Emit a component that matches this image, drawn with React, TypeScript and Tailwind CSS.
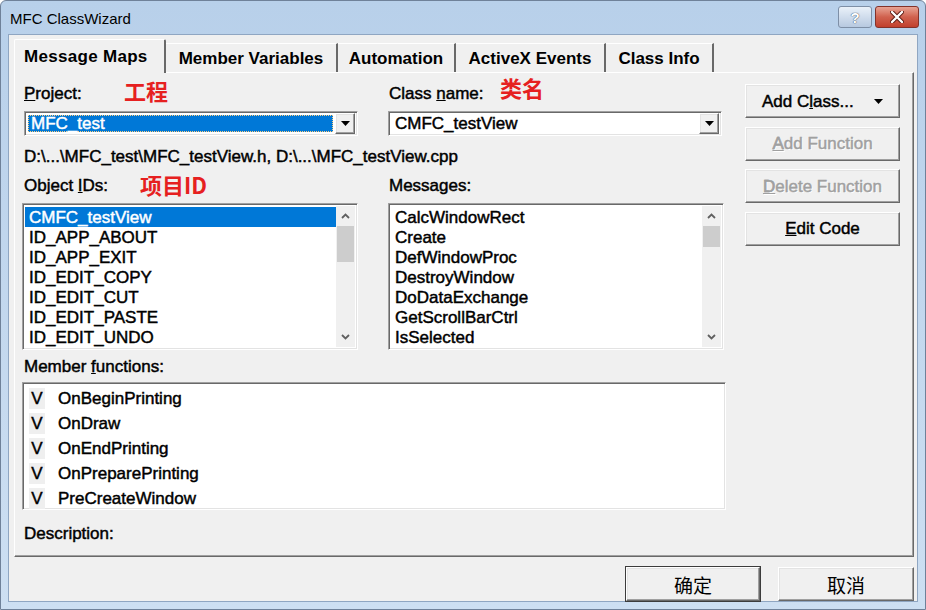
import React from "react"

const raised = "border border-t-white border-l-white border-r-[#696969] border-b-[#696969] shadow-[inset_-1px_-1px_0_#a0a0a0,inset_1px_1px_0_#e3e3e3]"
const sunken = "border border-t-[#a0a0a0] border-l-[#a0a0a0] border-r-white border-b-white shadow-[inset_1px_1px_0_#696969,inset_-1px_-1px_0_#e3e3e3]"
const txt = "text-[17px] [-webkit-text-stroke:0.45px_currentColor]"
const red = "text-[22px] font-bold text-[#e62020] leading-none font-['Noto_Sans_CJK_SC',sans-serif]"

const objectIds = ["CMFC_testView", "ID_APP_ABOUT", "ID_APP_EXIT", "ID_EDIT_COPY", "ID_EDIT_CUT", "ID_EDIT_PASTE", "ID_EDIT_UNDO"]
const messages = ["CalcWindowRect", "Create", "DefWindowProc", "DestroyWindow", "DoDataExchange", "GetScrollBarCtrl", "IsSelected"]
const memberFns = ["OnBeginPrinting", "OnDraw", "OnEndPrinting", "OnPreparePrinting", "PreCreateWindow"]
const tabs = [
    { name: "Member Variables", w: "w-[172px]" },
    { name: "Automation", w: "w-[118px]" },
    { name: "ActiveX Events", w: "w-[150px]" },
    { name: "Class Info", w: "w-[108px]" },
]

const Chevron = ({ up }: { up?: boolean }) => (
    <svg width="9" height="6" viewBox="0 0 9 6">
        <polyline points={up ? "1,5 4.5,1.5 8,5" : "1,1 4.5,4.5 8,1"} fill="none" stroke="#606060" strokeWidth="1.8" />
    </svg>
)

const DownTri = () => (
    <svg width="9" height="5" viewBox="0 0 9 5">
        <polygon points="0,0 9,0 4.5,5" fill="black" />
    </svg>
)

const ScrollBar = ({ thumb }: { thumb: string }) => (
    <div className="w-[19px] h-full flex flex-col bg-[#f0f0f0]">
        <div className="h-[20px] flex items-center justify-center"><Chevron up /></div>
        <div className={`${thumb} mx-[1px] bg-[#cdcdcd]`}></div>
        <div className="flex-1"></div>
        <div className="h-[20px] flex items-center justify-center"><Chevron /></div>
    </div>
)

const Combo = ({ value, selected }: { value: string; selected?: boolean }) => (
    <div className={`w-[334px] h-[25px] bg-white flex items-center p-[2px] ${sunken}`}>
        <div className="flex-1 h-full pl-[1px] pr-[2px] py-[1px]">
            {selected ? (
                <div className="h-full bg-[#0078d7] border border-dotted border-[#ffcf80] flex items-center px-[2px]">
                    <span className={`${txt} text-white leading-none`}>{value}</span>
                </div>
            ) : (
                <div className="h-full flex items-center px-[3px]">
                    <span className={`${txt} text-black leading-none`}>{value}</span>
                </div>
            )}
        </div>
        <div className={`w-[20px] h-[21px] bg-[#f0f0f0] flex items-center justify-center ${raised}`}>
            <DownTri />
        </div>
    </div>
)

const ListBox = ({ items, thumb, sel }: { items: string[]; thumb: string; sel?: number }) => (
    <div className={`w-[336px] h-[147px] bg-white flex p-[2px] ${sunken}`}>
        <div className="flex-1 flex flex-col pt-[1px]">
            {items.map((it, i) => (
                <div key={it} className={`h-[20px] flex items-center px-[4px] ${i === sel ? "bg-[#0078d7]" : ""}`}>
                    <span className={`${txt} leading-none ${i === sel ? "text-white" : "text-black"}`}>{it}</span>
                </div>
            ))}
        </div>
        <ScrollBar thumb={thumb} />
    </div>
)

const Btn = ({ children, disabled, className }: { children: React.ReactNode; disabled?: boolean; className?: string }) => (
    <div className={`h-[34px] bg-[#f0f0f0] flex items-center ${raised} ${className ?? ""}`}>
        <span className={`${txt} leading-none ${disabled ? "text-[#a0a0a0] [text-shadow:1px_1px_0_white]" : "text-black"}`}>{children}</span>
    </div>
)

export default function App() {
    return (
        <div className="w-[926px] h-[610px] flex flex-col bg-gradient-to-b from-[#b8d0ea] to-[#cddff2] border border-[#6f8199] rounded-t-[6px] text-black font-['Liberation_Sans','Noto_Sans_CJK_SC',sans-serif]">
            {/* title bar */}
            <div className="h-[35px] flex items-start pl-[9px] pr-[6px]">
                <span className="mt-[7px] text-[15px] text-black flex-1">MFC ClassWizard</span>
                <div className="flex gap-[3px] mt-[5px]">
                    <div className="w-[34px] h-[22px] rounded-[3px] border border-[#7e8fa6] bg-gradient-to-b from-[#eaf1f9] to-[#b7c9e0] flex items-center justify-center">
                        <span className="text-[15px] font-bold text-white leading-none [text-shadow:0_0_1px_#3b4b63,0_0_1px_#3b4b63]">?</span>
                    </div>
                    <div className="w-[44px] h-[22px] rounded-[3px] border border-[#83322a] bg-gradient-to-b from-[#e7a394] via-[#d0614e] to-[#c13f2d] flex items-center justify-center">
                        <svg width="14" height="12" viewBox="0 0 14 12">
                            <path d="M2,1 L12,11 M12,1 L2,11" stroke="#5a1a12" strokeWidth="4.2" strokeLinecap="round" />
                            <path d="M2,1 L12,11 M12,1 L2,11" stroke="white" strokeWidth="2.4" strokeLinecap="round" />
                        </svg>
                    </div>
                </div>
            </div>

            {/* client area */}
            <div className="flex-1 mx-[7px] mb-[7px] bg-[#f0f0f0] border border-[#8fa6c2] flex flex-col">
                {/* tabs */}
                <div className="flex items-end pl-[5px] pt-[3px] h-[37px] relative z-10">
                    <div className="w-[152px] h-[34px] mb-[-1px] bg-[#f0f0f0] border-l border-t border-white border-r-2 border-r-[#696969] rounded-t-[2px] flex items-center pl-[9px]">
                        <span className="text-[17px] font-bold tracking-[0.3px] leading-none">Message Maps</span>
                    </div>
                    {tabs.map((t) => (
                        <div key={t.name} className={`${t.w} h-[29px] border-t border-white border-r-2 border-r-[#696969] flex items-center justify-center`}>
                            <span className="text-[17px] font-bold leading-none">{t.name}</span>
                        </div>
                    ))}
                </div>

                {/* tab panel */}
                <div className="ml-[5px] w-[900px] h-[485px] border border-t-white border-l-white border-r-[#696969] border-b-[#696969] shadow-[inset_-1px_-1px_0_#a0a0a0] flex pl-[7px] pt-[11px]">
                    <div className="w-[704px] flex flex-col">
                        <div className="h-[20px] flex items-center">
                            <div className="w-[336px] flex items-center">
                                <span className={`${txt} ml-[2px] w-[100px]`}><u>P</u>roject:</span>
                                <span className={`${red} mt-[-9px]`}>工程</span>
                            </div>
                            <div className="ml-[30px] flex items-center">
                                <span className={`${txt} ml-[1px] w-[111px]`}>Class <u>n</u>ame:</span>
                                <span className={`${red} mt-[-14px]`}>类名</span>
                            </div>
                        </div>
                        <div className="mt-[7px] flex">
                            <div className="ml-[2px]"><Combo value="MFC_test" selected /></div>
                            <div className="ml-[30px]"><Combo value="CMFC_testView" /></div>
                        </div>
                        <div className="mt-[11px] h-[20px] flex items-center ml-[2px]">
                            <span className={txt}>D:\...\MFC_test\MFC_testView.h, D:\...\MFC_testView.cpp</span>
                        </div>
                        <div className="mt-[9px] h-[20px] flex items-center">
                            <div className="w-[336px] flex items-center">
                                <span className={`${txt} ml-[2px] w-[116px]`}>Object <u>I</u>Ds:</span>
                                <span className={`${red} mt-[-4px]`}>项目ID</span>
                            </div>
                            <div className="ml-[30px] flex items-center">
                                <span className={`${txt} ml-[1px]`}>Messa<u>g</u>es:</span>
                            </div>
                        </div>
                        <div className="mt-[7px] flex">
                            <ListBox items={objectIds} thumb="h-[36px]" sel={0} />
                            <div className="ml-[30px]"><ListBox items={messages} thumb="h-[21px]" /></div>
                        </div>
                        <div className="mt-[7px] h-[20px] flex items-center ml-[2px]">
                            <span className={txt}>Member <u>f</u>unctions:</span>
                        </div>
                        <div className={`mt-[5px] w-[704px] h-[128px] bg-white p-[2px] ${sunken}`}>
                            <div className="flex flex-col pl-[4px] pt-[1px]">
                                {memberFns.map((f) => (
                                    <div key={f} className="h-[25px] flex items-center">
                                        <div className="w-[16px] h-[21px] bg-[#efefef] flex items-center justify-center">
                                            <span className={`${txt} leading-none`}>V</span>
                                        </div>
                                        <span className={`${txt} ml-[13px] leading-none`}>{f}</span>
                                    </div>
                                ))}
                            </div>
                        </div>
                        <div className="mt-[14px] h-[20px] flex items-center ml-[2px]">
                            <span className={txt}>Description:</span>
                        </div>
                    </div>

                    {/* right buttons */}
                    <div className="ml-[19px] w-[155px] flex flex-col gap-[8.5px]">
                        <Btn className="pl-[16px] pr-[16px]">
                            <span className="flex items-center w-[121px]">Add C<u>l</u>ass...<span className="ml-auto"><DownTri /></span></span>
                        </Btn>
                        <Btn disabled className="justify-center"><u>A</u>dd Function</Btn>
                        <Btn disabled className="justify-center"><u>D</u>elete Function</Btn>
                        <Btn className="justify-center"><u>E</u>dit Code</Btn>
                    </div>
                </div>

                {/* bottom buttons */}
                <div className="flex justify-end gap-[18px] mt-[10px] pr-[3px]">
                    <div className={`w-[134px] h-[34px] bg-[#f0f0f0] flex items-center justify-center ${raised} outline outline-1 outline-[#3c3c3c]`}>
                        <span className="text-[19px] leading-none font-['Noto_Sans_CJK_SC',sans-serif]">确定</span>
                    </div>
                    <div className={`w-[136px] h-[34px] bg-[#f0f0f0] flex items-center justify-center ${raised}`}>
                        <span className="text-[19px] leading-none font-['Noto_Sans_CJK_SC',sans-serif]">取消</span>
                    </div>
                </div>
            </div>
        </div>
    )
}
